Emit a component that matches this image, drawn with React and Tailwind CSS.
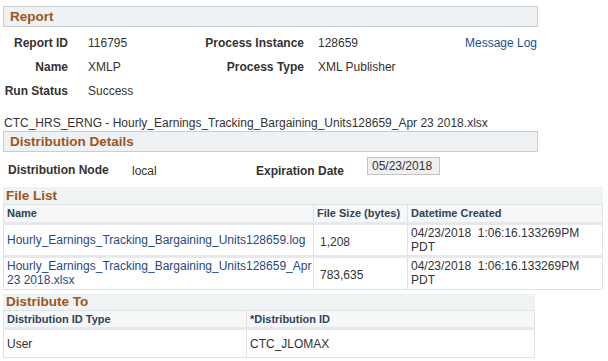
const FILES = [
  {
    name: "Hourly_Earnings_Tracking_Bargaining_Units128659.log",
    size: "1,208",
    created: "04/23/2018\u00a0\u00a01:06:16.133269PM",
  },
  {
    name: "Hourly_Earnings_Tracking_Bargaining_Units128659_Apr 23 2018.xlsx",
    size: "783,635",
    created: "04/23/2018\u00a0\u00a01:06:16.133269PM",
  },
];

function SectionBar({ title }) {
  return (
    <div className="ml-[3px] w-[535px] h-[21px] border border-[#c9cdd0] bg-[#eff2f4] pl-[6px] text-[13.5px] leading-[19px] font-bold text-[#9e5520]">
      {title}
    </div>
  );
}

function InfoRow({ label, value, label2, value2, extra }) {
  return (
    <div className="flex items-center h-[24px] text-[12px]">
      <span className="w-[68px] text-right font-bold text-[#333]">{label}</span>
      <span className="ml-[20px] w-[94px] text-[#333]">{value}</span>
      <span className="w-[122px] text-right font-bold text-[#333]">{label2}</span>
      <span className="ml-[14px] w-[147px] text-[#333]">{value2}</span>
      {extra && <span className="text-[#1d4f91]">{extra}</span>}
    </div>
  );
}

export default function App() {
  return (
    <div
      className="w-[608px] h-[361px] overflow-hidden bg-white text-[#333]"
      style={{ fontFamily: '"Liberation Sans", Arial, sans-serif' }}
    >
      <div className="pt-[6px]">
        <SectionBar title="Report" />
      </div>

      <div className="pt-[4px]">
        <InfoRow label="Report ID" value="116795" label2="Process Instance" value2="128659" extra="Message Log" />
        <InfoRow label="Name" value="XMLP" label2="Process Type" value2="XML Publisher" />
        <InfoRow label="Run Status" value="Success" />
      </div>

      <div className="mt-[13px] pl-[4px] text-[12px] leading-[14px]">
        CTC_HRS_ERNG - Hourly_Earnings_Tracking_Bargaining_Units128659_Apr 23 2018.xlsx
      </div>

      <div className="mt-[1px]">
        <SectionBar title="Distribution Details" />
      </div>

      <div className="flex items-center h-[35px] pl-[8px] text-[12px]">
        <span className="w-[124px] font-bold">Distribution Node</span>
        <span className="w-[124px] pt-[3px]">local</span>
        <span className="w-[111px] font-bold pt-[3px]">Expiration Date</span>
        <span className="w-[73px] h-[18px] border border-[#c4c4c4] bg-[#f0f0f0] pl-[4px] leading-[16px] -mt-[8px]">
          05/23/2018
        </span>
      </div>

      <div className="ml-[3px] w-[600px]">
        <div className="h-[17px] bg-[#f0f3f4] pl-[3px] text-[13.5px] leading-[17px] font-bold text-[#9e5520]">
          File List
        </div>
        <table className="w-full table-fixed border-collapse text-[12px]">
          <colgroup>
            <col className="w-[310px]" />
            <col className="w-[94px]" />
            <col />
          </colgroup>
          <thead>
            <tr className="h-[18px] bg-[#f6f7f8] text-[11px] text-[#2f4357]">
              <th className="border border-[#dfe1e3] pl-[3px] text-left font-bold whitespace-nowrap">Name</th>
              <th className="border border-[#dfe1e3] pl-[3px] text-left font-bold whitespace-nowrap">File Size (bytes)</th>
              <th className="border border-[#dfe1e3] pl-[3px] text-left font-bold whitespace-nowrap">Datetime Created</th>
            </tr>
          </thead>
          <tbody>
            {FILES.map((f) => (
              <tr key={f.name} className="h-[33px] border-t-[3px] border-[#e6e8ea]">
                <td className="border border-[#dfe1e3] px-[3px] leading-[14px] align-middle text-[#1f4a7f]">{f.name}</td>
                <td className="border border-[#dfe1e3] pl-[6px] pt-[4px] align-middle">{f.size}</td>
                <td className="border border-[#dfe1e3] pl-[3px] leading-[14px] align-middle">
                  {f.created}
                  <br />
                  PDT
                </td>
              </tr>
            ))}
          </tbody>
        </table>
      </div>

      <div className="mt-[4px] ml-[3px] w-[532px]">
        <div className="h-[16px] bg-[#f0f3f4] pl-[3px] text-[13.5px] leading-[16px] font-bold text-[#9e5520]">
          Distribute To
        </div>
        <table className="w-full table-fixed border-collapse text-[12px]">
          <colgroup>
            <col className="w-[243px]" />
            <col />
          </colgroup>
          <thead>
            <tr className="h-[18px] bg-[#f6f7f8] text-[11px] text-[#2f4357]">
              <th className="border border-[#dfe1e3] pl-[3px] text-left font-bold">Distribution ID Type</th>
              <th className="border border-[#dfe1e3] pl-[3px] text-left font-bold">*Distribution ID</th>
            </tr>
          </thead>
          <tbody>
            <tr className="h-[29px] border-t-[3px] border-[#e6e8ea]">
              <td className="border border-[#dfe1e3] pl-[3px]">User</td>
              <td className="border border-[#dfe1e3] pl-[3px]">CTC_JLOMAX</td>
            </tr>
          </tbody>
        </table>
      </div>
    </div>
  );
}
